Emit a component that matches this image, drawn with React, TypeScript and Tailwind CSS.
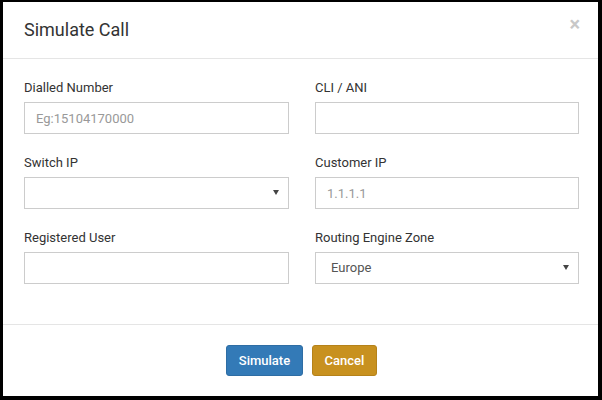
import * as React from 'react'

const font = { fontFamily: 'Roboto, "Liberation Sans", Arial, sans-serif' }

function Label({ children }: { children: React.ReactNode }) {
  return (
    <label className="block h-[18px] mb-[5px] text-[13px] leading-[18px] text-[#333]">
      {children}
    </label>
  )
}

function TextField({ label, placeholder }: { label: string; placeholder?: string }) {
  return (
    <div>
      <Label>{label}</Label>
      <input
        className="block w-full h-[32px] border border-[#ccc] bg-white pl-[11px] text-[13px] text-[#555] placeholder:text-[#999] outline-none"
        style={font}
        placeholder={placeholder}
      />
    </div>
  )
}

function SelectField({ label, options }: { label: string; options: string[] }) {
  const [value, setValue] = React.useState(options[0])
  return (
    <div>
      <Label>{label}</Label>
      <div className="relative">
        <select
          value={value}
          onChange={e => setValue(e.target.value)}
          className="block w-full h-[32px] border border-[#ccc] bg-white pl-[15px] text-[13px] text-[#555] appearance-none outline-none rounded-none"
          style={font}>
          {options.map(o => (
            <option key={o} value={o}>
              {o}
            </option>
          ))}
        </select>
        <svg
          className="absolute right-[10px] top-[13px] pointer-events-none"
          width="6"
          height="5"
          viewBox="0 0 6 5">
          <path d="M0 0 H6 L3 5 Z" fill="#444" />
        </svg>
      </div>
    </div>
  )
}

export default function App() {
  return (
    <div
      className="w-[602px] h-[400px] bg-black pl-[3px] pt-[2px] pr-[4px] pb-[4px]"
      style={font}>
      <div className="w-full h-full bg-white flex flex-col">
        <div className="h-[57px] border-b border-[#e5e5e5] flex items-center justify-between pl-[21px] pr-[18px]">
          <h4 className="text-[18px] text-[#333] leading-none">Simulate Call</h4>
          <button className="text-[20px] font-bold leading-none text-[#c8c8c8] -mt-[12px]">
            ×
          </button>
        </div>
        <div className="pl-[21px] pt-[20px] pb-[40px] border-b border-[#e5e5e5]">
          <div className="grid grid-cols-[265px_264px] gap-x-[26px] gap-y-[20px]">
            <TextField label="Dialled Number" placeholder="Eg:15104170000" />
            <TextField label="CLI / ANI" />
            <SelectField label="Switch IP" options={['']} />
            <TextField label="Customer IP" placeholder="1.1.1.1" />
            <TextField label="Registered User" />
            <SelectField label="Routing Engine Zone" options={['Europe', 'North America', 'Asia']} />
          </div>
        </div>
        <div className="flex justify-center gap-[9px] pt-[20px] pl-[2px]">
          <button className="w-[77px] h-[31px] rounded-[3px] bg-[#337ab7] border border-[#2e6da4] text-white text-[13px] font-medium">
            Simulate
          </button>
          <button className="w-[65px] h-[31px] rounded-[3px] bg-[#c8911f] border border-[#b5821a] text-white text-[13px] font-medium">
            Cancel
          </button>
        </div>
      </div>
    </div>
  )
}
